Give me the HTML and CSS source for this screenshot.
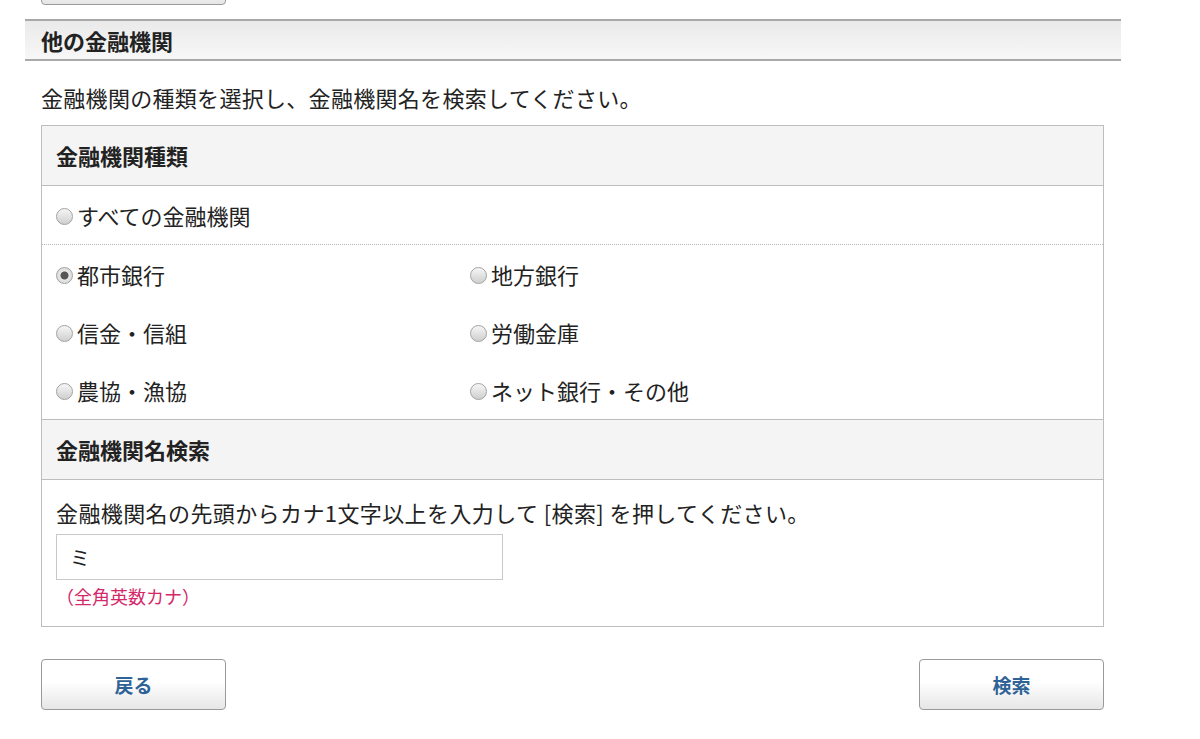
FILE: index.html
```html
<!DOCTYPE html>
<html lang="ja">
<head>
  <meta charset="UTF-8">
  <title>他の金融機関</title>
  <link rel="stylesheet" href="styles.css">
</head>
<body>
  <div class="prev-actions">
    <button class="btn" type="button" aria-label="次へ"></button>
  </div>

  <h2 class="section-title">他の金融機関</h2>

  <main class="content">
    <p class="lead">金融機関の種類を選択し、金融機関名を検索してください。</p>

    <div class="panel">
      <h3 class="panel-head">金融機関種類</h3>
      <div class="row-all">
        <label class="radio"><input type="radio" name="kind">すべての金融機関</label>
      </div>
      <div class="kind-grid">
        <label class="radio"><input type="radio" name="kind" checked>都市銀行</label>
        <label class="radio"><input type="radio" name="kind">地方銀行</label>
        <label class="radio"><input type="radio" name="kind">信金・信組</label>
        <label class="radio"><input type="radio" name="kind">労働金庫</label>
        <label class="radio"><input type="radio" name="kind">農協・漁協</label>
        <label class="radio"><input type="radio" name="kind">ネット銀行・その他</label>
      </div>

      <h3 class="panel-head panel-head-mid">金融機関名検索</h3>
      <div class="search-body">
        <p class="search-help">金融機関名の先頭からカナ1文字以上を入力して&nbsp;[検索]&nbsp;を押してください。</p>
        <input class="search-input" type="text" value="ミ">
        <p class="note">（全角英数カナ）</p>
      </div>
    </div>

    <div class="actions">
      <button class="btn" type="button">戻る</button>
      <button class="btn" type="button">検索</button>
    </div>
  </main>
</body>
</html>
```

FILE: styles.css
```css
html, body {
  margin: 0;
  padding: 0;
}

body {
  background: #fff;
  color: #222;
  font-family: "Noto Sans CJK JP", "Noto Sans", sans-serif;
  font-size: 22px;
}

h2, h3, p {
  margin: 0;
}

.btn {
  width: 185px;
  height: 51px;
  border: 1px solid #9a9a9a;
  border-radius: 4px;
  background: linear-gradient(#ffffff 45%, #e6e6e6);
  color: #2f6397;
  font-family: inherit;
  font-size: 19px;
  font-weight: bold;
  cursor: pointer;
  box-sizing: border-box;
}

.prev-actions {
  height: 5px;
  overflow: hidden;
  display: flex;
  align-items: flex-end;
  padding-left: 41px;
}

.prev-actions .btn {
  flex-shrink: 0;
}

.section-title {
  margin: 14px 0 0 25px;
  width: 1096px;
  height: 42px;
  box-sizing: border-box;
  padding-left: 16px;
  border-top: 2px solid #a9a9a9;
  border-bottom: 2px solid #a9a9a9;
  background: linear-gradient(#eaeaea, #f7f7f7);
  font-size: 22px;
  line-height: 38px;
  font-weight: bold;
}

.content {
  margin-left: 41px;
  width: 1063px;
}

.lead {
  margin-top: 20px;
  line-height: 33px;
  letter-spacing: 0.3px;
}

.panel {
  margin-top: 11px;
  border: 1px solid #bdbdbd;
}

.panel-head {
  height: 59px;
  line-height: 59px;
  padding-left: 14px;
  background: #f4f4f4;
  border-bottom: 1px solid #bdbdbd;
  font-size: 22px;
  font-weight: bold;
}

.panel-head-mid {
  border-top: 1px solid #bdbdbd;
}

.row-all {
  height: 58px;
  display: flex;
  align-items: center;
  padding-left: 14px;
  border-bottom: 1px dotted #b5b5b5;
}

.kind-grid {
  display: grid;
  grid-template-columns: 414px 1fr;
  grid-auto-rows: 58px;
  padding-left: 14px;
}

.radio {
  display: flex;
  align-items: center;
  line-height: 1;
}

.radio input {
  appearance: none;
  -webkit-appearance: none;
  width: 17px;
  height: 17px;
  margin: 2px 4px 0 0;
  border: 1px solid #a2a2a2;
  border-radius: 50%;
  background: linear-gradient(#f6f6f6, #cfcfcf);
  box-sizing: border-box;
}

.radio input:checked {
  background: radial-gradient(circle, #555 0 3.5px, #e8e8e8 4.5px, #d0d0d0);
}

.search-body {
  padding: 16px 14px 14px;
}

.search-help {
  line-height: 33px;
  letter-spacing: 0.4px;
}

.search-input {
  display: block;
  margin-top: 5px;
  width: 447px;
  height: 46px;
  box-sizing: border-box;
  padding: 0 13px;
  border: 1px solid #c9c9c9;
  font-family: inherit;
  font-size: 20px;
  color: #222;
}

.note {
  color: #d3286a;
  font-size: 18px;
  line-height: 32px;
}

.actions {
  margin-top: 32px;
  display: flex;
  justify-content: space-between;
}
```
